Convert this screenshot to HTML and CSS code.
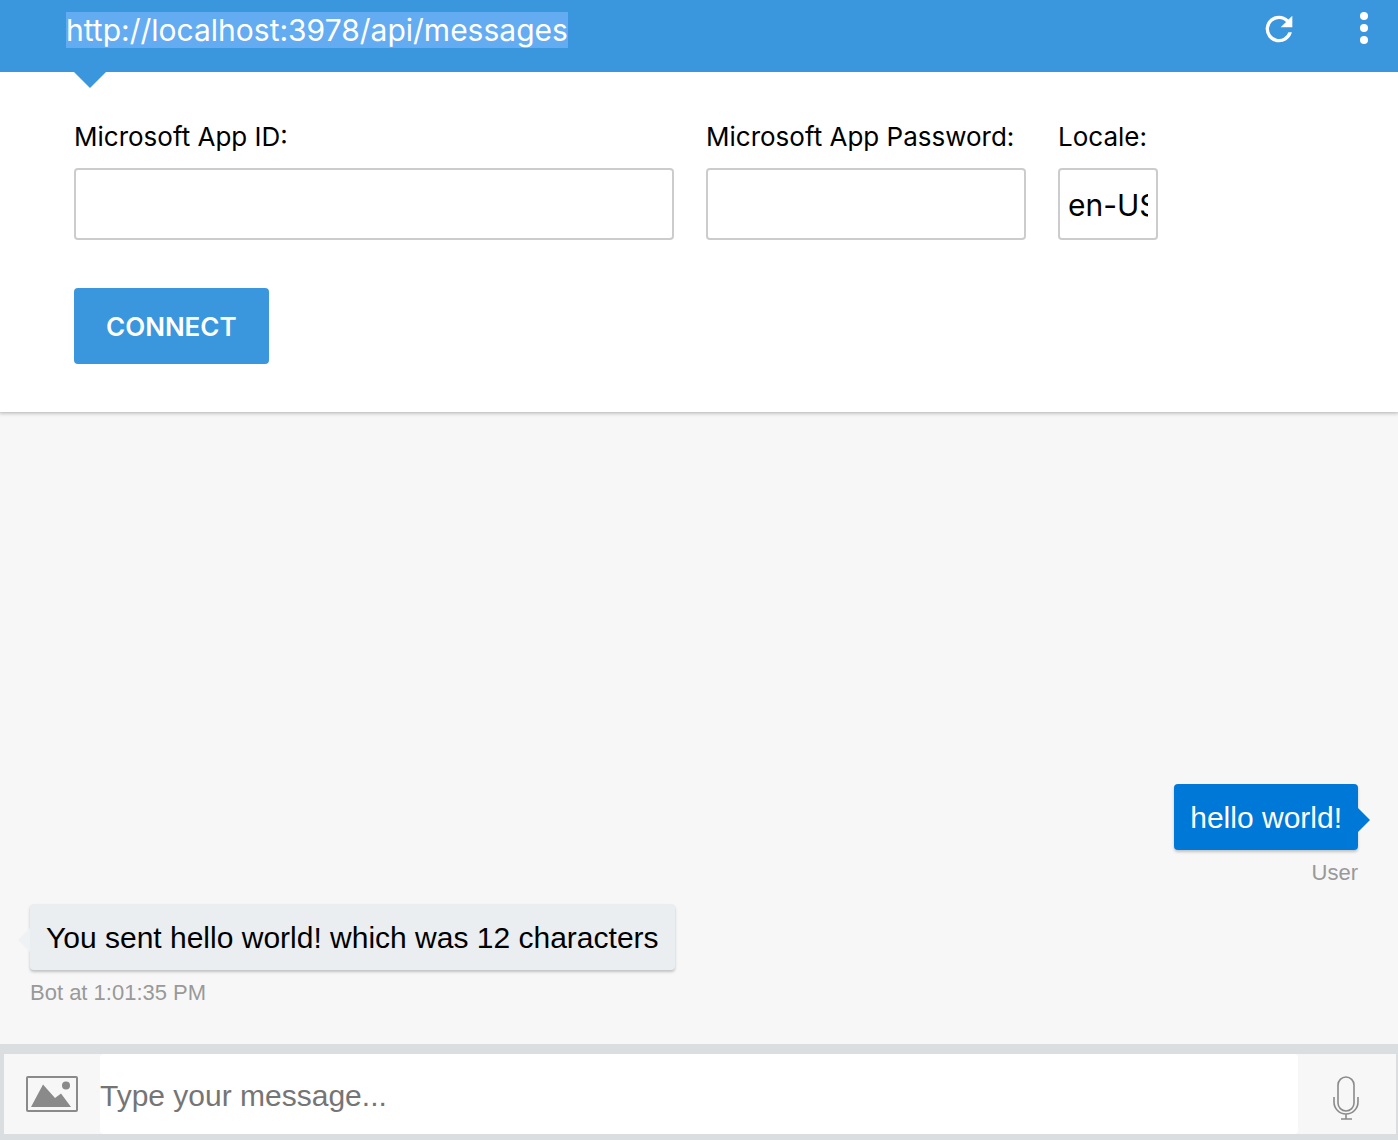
FILE: index.html
```html
<!DOCTYPE html>
<html lang="en">
<head>
<meta charset="utf-8">
<title>Bot Framework Channel Emulator</title>
<link rel="stylesheet" href="styles.css">
</head>
<body>
<header class="address-bar">
  <input class="address" id="address" type="text" aria-label="Bot endpoint URL" value="http://localhost:3978/api/messages" spellcheck="false">
  <button class="icon-button" type="button" aria-label="Refresh">
    <svg width="40" height="40" viewBox="0 0 24 24" fill="#fff"><path d="M17.65 6.95A7.96 7.96 0 0 0 12 4.600a8 8 0 1 0 7.730 10h-2.080A6 6 0 1 1 12 6.600c1.660 0 3.140.69 4.220 1.780L13 11.600h7V4.600z"/></svg>
  </button>
  <button class="icon-button" type="button" aria-label="Menu">
    <svg width="8" height="32" viewBox="0 0 8 32" fill="#fff"><circle cx="4" cy="4" r="4"/><circle cx="4" cy="16" r="4"/><circle cx="4" cy="28" r="4"/></svg>
  </button>
</header>

<form class="settings">
  <div class="fields">
    <div class="field field-id">
      <label for="app-id">Microsoft App ID:</label>
      <input id="app-id" type="text">
    </div>
    <div class="field field-password">
      <label for="app-password">Microsoft App Password:</label>
      <input id="app-password" type="password">
    </div>
    <div class="field field-locale">
      <label for="locale">Locale:</label>
      <input id="locale" type="text" value="en-US">
    </div>
  </div>
  <button class="connect" type="button">CONNECT</button>
</form>

<main class="log">
  <article class="message from-user">
    <p class="bubble">hello world!</p>
    <p class="caption">User</p>
  </article>
  <article class="message from-bot">
    <p class="bubble">You sent hello world! which was 12 characters</p>
    <p class="caption">Bot at 1:01:35 PM</p>
  </article>
</main>

<footer class="console">
  <button class="upload" type="button" aria-label="Upload image">
    <svg width="52" height="36" viewBox="0 0 52 36"><rect x="1" y="1" width="50" height="34" rx="1" fill="none" stroke="#8a8a8a" stroke-width="2"/><path d="M5 31 17 8.500 29 22 35 17.500 45 31z" fill="#8a8a8a"/><circle cx="40" cy="9.500" r="4" fill="#8a8a8a"/></svg>
  </button>
  <input class="composer" type="text" aria-label="Message" placeholder="Type your message...">
  <button class="mic" type="button" aria-label="Speak">
    <svg width="26" height="44" viewBox="0 0 26 44" fill="none" stroke="#8a8a8a" stroke-width="1.600"><rect x="5" y="1" width="16" height="34" rx="8"/><path d="M1 21v5a12 12 0 0 0 24 0v-5M13 38v5M8 43h11"/></svg>
  </button>
</footer>
<script>
  document.getElementById('address').select();
</script>
</body>
</html>
```

FILE: styles.css
```css
* {
  box-sizing: border-box;
}

html,
body {
  height: 100%;
}

body {
  margin: 0;
  display: flex;
  flex-direction: column;
  background: #f7f7f7;
  color: #000;
  font-family: "Liberation Sans", Arial, sans-serif;
  font-size: 30px;
}

button,
input {
  margin: 0;
  padding: 0;
  border: 0;
  background: none;
  color: inherit;
  font: inherit;
  outline: none;
}

button {
  display: flex;
  align-items: center;
  justify-content: center;
  cursor: pointer;
}

p {
  margin: 0;
}

.address-bar,
.settings {
  font-family: Inter, "Noto Sans", sans-serif;
}

.address-bar {
  position: relative;
  flex: none;
  display: flex;
  align-items: flex-start;
  gap: 16px;
  height: 72px;
  padding-left: 66px;
  background: #3a96dd;
  color: #fff;
}

.address-bar::after {
  content: "";
  position: absolute;
  top: 100%;
  left: 74px;
  border: 16px solid transparent;
  border-top-color: #3a96dd;
  border-bottom: 0;
}

.address {
  flex: 1;
  min-width: 0;
  height: 60px;
}

.address::selection {
  background: #64acf2;
  color: #fff;
}

.icon-button {
  width: 69px;
  height: 56px;
}

.settings {
  flex: none;
  display: flex;
  flex-direction: column;
  align-items: flex-start;
  gap: 48px;
  padding: 48px 74px;
  background: #fff;
  box-shadow: 0 0 4px 1px rgba(0, 0, 0, 0.3);
}

.fields {
  display: flex;
  gap: 32px;
  max-width: 100%;
}

.field {
  display: flex;
  flex-direction: column;
  gap: 14px;
}

.field label {
  font-size: 26px;
  line-height: 34px;
  white-space: nowrap;
}

.field input {
  width: 100%;
  height: 72px;
  padding: 2px 8px 0;
  border: 2px solid #ccc;
  border-radius: 4px;
}

.field-id {
  width: 600px;
}

.field-password {
  width: 320px;
}

.field-locale {
  width: 100px;
}

.connect {
  height: 76px;
  padding: 0 32px;
  border-radius: 4px;
  background: #3a96dd;
  color: #fff;
  font-size: 26px;
  font-weight: 600;
}

.log {
  flex: 1;
  display: flex;
  flex-direction: column;
  justify-content: flex-end;
  gap: 18px;
  padding: 18px 40px 38px 30px;
}

.message {
  display: flex;
  flex-direction: column;
  align-items: flex-start;
  gap: 10px;
}

.from-user {
  align-items: flex-end;
}

.bubble {
  position: relative;
  padding: 17px 16px 15px;
  border-radius: 4px;
  line-height: 34px;
  box-shadow: 0 2px 3px rgba(0, 0, 0, 0.22);
}

.bubble::before {
  content: "";
  position: absolute;
  top: 24px;
  border: 12px solid transparent;
}

.from-user .bubble {
  background: #0078d7;
  color: #fff;
}

.from-user .bubble::before {
  left: 100%;
  border-left-color: #0078d7;
  border-right: 0;
}

.from-bot .bubble {
  background: #eaeef1;
}

.from-bot .bubble::before {
  right: 100%;
  border-right-color: #eff2f4;
  border-left: 0;
}

.caption {
  color: #999;
  font-size: 22px;
  line-height: 26px;
}

.console {
  flex: none;
  display: flex;
  border: solid #dbdee1;
  border-width: 10px 2px 6px 4px;
}

.composer {
  flex: 1;
  min-width: 0;
  height: 80px;
  padding-top: 4px;
  border-radius: 4px;
  background: #fff;
}

.composer::placeholder {
  color: #757575;
  opacity: 1;
}

.upload {
  width: 96px;
}

.mic {
  width: 98px;
  padding: 8px 2px 0 0;
}
```
